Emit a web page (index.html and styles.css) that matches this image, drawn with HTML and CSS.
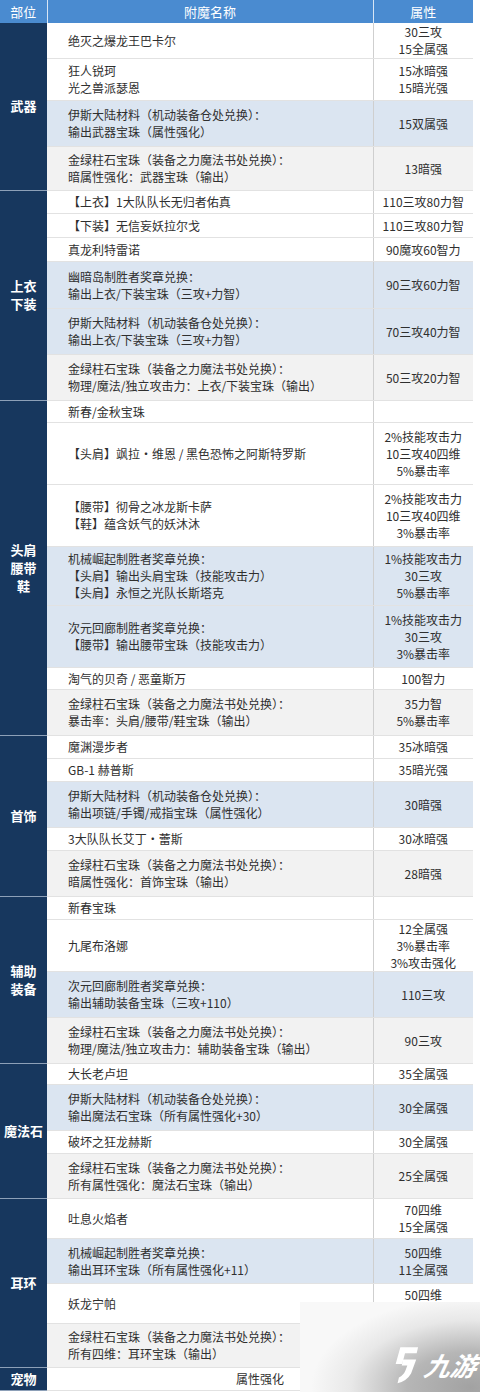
FILE: index.html
```html
<!DOCTYPE html>
<html lang="zh-CN">
<head>
<meta charset="utf-8">
<title>附魔表</title>
<link rel="stylesheet" href="styles.css">
</head>
<body>
<table class="tbl">
  <colgroup><col class="c1"><col class="c2"><col class="c3"></colgroup>
  <thead>
    <tr class="head"><th>部位</th><th>附魔名称</th><th>属性</th></tr>
  </thead>
  <tbody>
    <tr class="h35"><td class="part" rowspan="4">武器</td><td class="name">绝灭之爆龙王巴卡尔</td><td class="attr">30三攻<br>15全属强</td></tr>
    <tr class="h42"><td class="name">狂人锐珂<br>光之兽派瑟恩</td><td class="attr">15冰暗强<br>15暗光强</td></tr>
    <tr class="h46 blue"><td class="name">伊斯大陆材料（机动装备仓处兑换）：<br>输出武器宝珠（属性强化）</td><td class="attr">15双属强</td></tr>
    <tr class="h44 gray last"><td class="name">金绿柱石宝珠（装备之力魔法书处兑换）：<br>暗属性强化：武器宝珠（输出）</td><td class="attr">13暗强</td></tr>

    <tr class="h23"><td class="part" rowspan="6">上衣<br>下装</td><td class="name">【上衣】1大队队长无归者佑真</td><td class="attr">110三攻80力智</td></tr>
    <tr class="h24"><td class="name">【下装】无信妄妖拉尔戈</td><td class="attr">110三攻80力智</td></tr>
    <tr class="h24"><td class="name">真龙利特雷诺</td><td class="attr">90魔攻60智力</td></tr>
    <tr class="h47 blue"><td class="name">幽暗岛制胜者奖章兑换：<br>输出上衣/下装宝珠（三攻+力智）</td><td class="attr">90三攻60力智</td></tr>
    <tr class="h46 blue"><td class="name">伊斯大陆材料（机动装备仓处兑换）：<br>输出上衣/下装宝珠（三攻+力智）</td><td class="attr">70三攻40力智</td></tr>
    <tr class="h46 gray last"><td class="name">金绿柱石宝珠（装备之力魔法书处兑换）：<br>物理/魔法/独立攻击力：上衣/下装宝珠（输出）</td><td class="attr">50三攻20力智</td></tr>

    <tr class="h22"><td class="part" rowspan="7">头肩<br>腰带<br>鞋</td><td class="name">新春/金秋宝珠</td><td class="attr"></td></tr>
    <tr class="h62"><td class="name">【头肩】飒拉·维恩 / 黑色恐怖之阿斯特罗斯</td><td class="attr">2%技能攻击力<br>10三攻40四维<br>5%暴击率</td></tr>
    <tr class="h62"><td class="name">【腰带】彻骨之冰龙斯卡萨<br>【鞋】蕴含妖气的妖沐沐</td><td class="attr">2%技能攻击力<br>10三攻40四维<br>3%暴击率</td></tr>
    <tr class="h59 blue"><td class="name">机械崛起制胜者奖章兑换：<br>【头肩】输出头肩宝珠（技能攻击力）<br>【头肩】永恒之光队长斯塔克</td><td class="attr">1%技能攻击力<br>30三攻<br>5%暴击率</td></tr>
    <tr class="h62 blue"><td class="name">次元回廊制胜者奖章兑换：<br>【腰带】输出腰带宝珠（技能攻击力）</td><td class="attr">1%技能攻击力<br>30三攻<br>3%暴击率</td></tr>
    <tr class="h22"><td class="name">淘气的贝奇 / 恶童斯万</td><td class="attr">100智力</td></tr>
    <tr class="h46 gray last"><td class="name">金绿柱石宝珠（装备之力魔法书处兑换）：<br>暴击率：头肩/腰带/鞋宝珠（输出）</td><td class="attr">35力智<br>5%暴击率</td></tr>

    <tr class="h23"><td class="part" rowspan="5">首饰</td><td class="name">魔渊漫步者</td><td class="attr">35冰暗强</td></tr>
    <tr class="h23"><td class="name">GB-1 赫普斯</td><td class="attr">35暗光强</td></tr>
    <tr class="h46 blue"><td class="name">伊斯大陆材料（机动装备仓处兑换）：<br>输出项链/手镯/戒指宝珠（属性强化）</td><td class="attr">30暗强</td></tr>
    <tr class="h23"><td class="name">3大队队长艾丁·蕾斯</td><td class="attr">30冰暗强</td></tr>
    <tr class="h46 gray last"><td class="name">金绿柱石宝珠（装备之力魔法书处兑换）：<br>暗属性强化：首饰宝珠（输出）</td><td class="attr">28暗强</td></tr>

    <tr class="h23"><td class="part" rowspan="4">辅助<br>装备</td><td class="name">新春宝珠</td><td class="attr"></td></tr>
    <tr class="h52"><td class="name">九尾布洛娜</td><td class="attr">12全属强<br>3%暴击率<br>3%攻击强化</td></tr>
    <tr class="h46 blue"><td class="name">次元回廊制胜者奖章兑换：<br>输出辅助装备宝珠（三攻+110）</td><td class="attr">110三攻</td></tr>
    <tr class="h46 gray last"><td class="name">金绿柱石宝珠（装备之力魔法书处兑换）：<br>物理/魔法/独立攻击力：辅助装备宝珠（输出）</td><td class="attr">90三攻</td></tr>

    <tr class="h21"><td class="part" rowspan="4">魔法石</td><td class="name">大长老卢坦</td><td class="attr">35全属强</td></tr>
    <tr class="h46 blue"><td class="name">伊斯大陆材料（机动装备仓处兑换）：<br>输出魔法石宝珠（所有属性强化+30）</td><td class="attr">30全属强</td></tr>
    <tr class="h23"><td class="name">破坏之狂龙赫斯</td><td class="attr">30全属强</td></tr>
    <tr class="h45 gray last"><td class="name">金绿柱石宝珠（装备之力魔法书处兑换）：<br>所有属性强化：魔法石宝珠（输出）</td><td class="attr">25全属强</td></tr>

    <tr class="h40"><td class="part" rowspan="4">耳环</td><td class="name">吐息火焰者</td><td class="attr">70四维<br>15全属强</td></tr>
    <tr class="h45 blue"><td class="name">机械崛起制胜者奖章兑换：<br>输出耳环宝珠（所有属性强化+11）</td><td class="attr">50四维<br>11全属强</td></tr>
    <tr class="h40"><td class="name">妖龙宁帕</td><td class="attr">50四维<br>&nbsp;</td></tr>
    <tr class="h44 gray last"><td class="name">金绿柱石宝珠（装备之力魔法书处兑换）：<br>所有四维：耳环宝珠（输出）</td><td class="attr"></td></tr>

    <tr class="h23 last"><td class="part">宠物</td><td class="pet" colspan="2">属性强化</td></tr>
  </tbody>
</table>

<div class="watermark">
  <svg class="wm-logo" viewBox="0 0 30 40" width="28" height="38" aria-hidden="true">
    <path d="M10 1 H29 L27.5 7.5 H15 L12 19 H5 Z" fill="#ffffff"/>
    <path d="M13 14 H27 L21.5 29 Q17 37 7 39.5 L8.5 33.5 Q13.5 31 15.5 26 L17.5 20.5 H11.5 Z" fill="#ffffff"/>
  </svg>
  <span class="wm-text">九游</span>
</div>
</body>
</html>
```

FILE: styles.css
```css
* {
  box-sizing: border-box;
}

html,
body {
  margin: 0;
  padding: 0;
  background: #ffffff;
}

body {
  position: relative;
  width: 480px;
  height: 1392px;
  overflow: hidden;
  font-family: "Noto Sans CJK SC", "Microsoft YaHei", sans-serif;
  font-size: 12px;
  color: #2f2f2f;
}

.tbl {
  width: 473px;
  border-collapse: collapse;
  table-layout: fixed;
}

.c1 { width: 47px; }
.c2 { width: 326px; }
.c3 { width: 100px; }

.head th {
  height: 23px;
  padding: 0;
  background: #4a8bd0;
  color: #ffffff;
  font-size: 13px;
  font-weight: normal;
  line-height: 17px;
  text-align: center;
  border-left: 1px solid #d8e6f5;
}

.head th:first-child {
  border-left: none;
}

.tbl td {
  padding: 0;
  line-height: 17px;
  vertical-align: middle;
  border-bottom: 1px solid #e2e2e2;
  background: #ffffff;
}

.tbl tr.blue td {
  background: #dbe5f1;
}

.tbl tr.gray td {
  background: #f2f2f2;
}

.tbl td.part {
  background: #17375e;
  color: #ffffff;
  font-size: 13px;
  font-weight: bold;
  line-height: 18px;
  text-align: center;
  border-bottom: 1px solid #8da0b8;
}

.name {
  padding-left: 21px !important;
  white-space: nowrap;
}

.attr {
  text-align: center;
  border-left: 1px solid #cfcfcf;
  white-space: nowrap;
}

.pet {
  text-align: center;
}

.h21 { height: 21px; }
.h22 { height: 22px; }
.h23 { height: 23px; }
.h24 { height: 24px; }
.h35 { height: 35px; }
.h40 { height: 40px; }
.h42 { height: 42px; }
.h44 { height: 44px; }
.h45 { height: 45px; }
.h46 { height: 46px; }
.h47 { height: 47px; }
.h52 { height: 52px; }
.h59 { height: 59px; }
.h62 { height: 62px; }

.watermark {
  position: absolute;
  left: 300px;
  top: 1302px;
  width: 180px;
  height: 90px;
  display: flex;
  align-items: center;
  justify-content: flex-end;
  gap: 6px;
  padding: 0 3px 4px 0;
  background:
    radial-gradient(ellipse 160px 90px at 95% 95%, #a2a2a2 0%, #b6b6b6 40%, rgba(225,225,225,0.7) 75%, rgba(250,250,250,0) 100%),
    #f8f8f8;
}

.wm-logo {
  display: block;
  margin-top: 40px;
}

.wm-text {
  margin-top: 40px;
  color: #ffffff;
  font-size: 26px;
  font-weight: bold;
  font-style: italic;
  line-height: 30px;
  transform: skewX(-12deg);
}
```
